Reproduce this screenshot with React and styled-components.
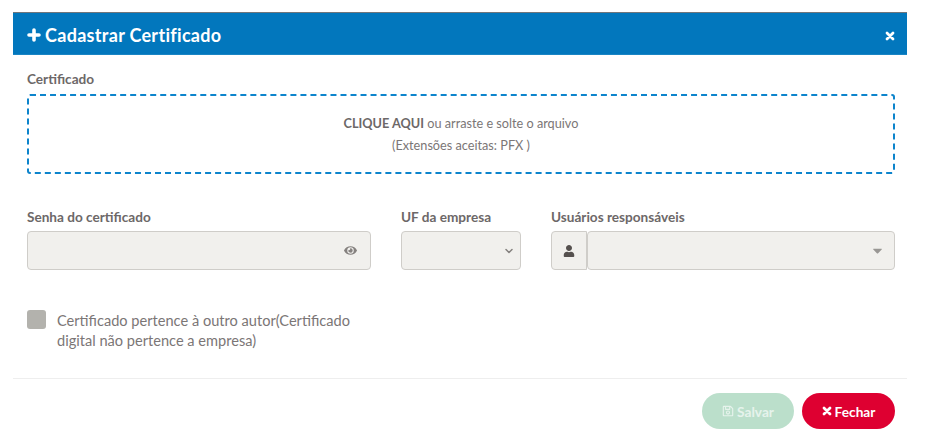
import React from "react";
import styled, { createGlobalStyle } from "styled-components";
import { FaEye, FaUser, FaRegSave, FaCaretDown } from "react-icons/fa";
import { LuChevronDown } from "react-icons/lu";

const Global = createGlobalStyle`
  html, body { margin: 0; padding: 0; background: #fff; }
  body { font-family: "Lato", "Open Sans", sans-serif; color: #6d6868; }
  * { box-sizing: border-box; }
`;

const Page = styled.div`
  width: 933px;
  height: 442px;
  padding: 12px 26px 0 13px;
  overflow: hidden;
`;

const Modal = styled.div`
  display: flex;
  flex-direction: column;
  background: #fff;
`;

const Header = styled.header`
  height: 43px;
  background: #0277bd;
  border-top: 1px solid #70767c;
  border-bottom: 1px solid #1a85c4;
  display: flex;
  align-items: center;
  justify-content: space-between;
  padding: 2px 12px 0 14px;
  color: #fff;
`;

const Title = styled.h1`
  margin: 0;
  font-size: 18px;
  font-weight: 700;
  letter-spacing: 0.3px;
  display: flex;
  align-items: center;
  gap: 4px;
`;

const Glyph = styled.svg`
  flex: none;
  display: block;
  stroke: currentColor;
  fill: none;
  stroke-linecap: round;
`;

const PlusIcon = () => (
  <Glyph width="14" height="14" viewBox="0 0 14 14" strokeWidth="3.6">
    <path d="M7 2v10M2 7h10" />
  </Glyph>
);

const CrossIcon = ({ size }) => (
  <Glyph width={size} height={size} viewBox="0 0 10 10" strokeWidth="2.8">
    <path d="M2 2l6 6M8 2l-6 6" />
  </Glyph>
);

const CloseButton = styled.span`
  display: flex;
  margin-top: 2px;
`;

const Body = styled.div`
  padding: 16px 12px 0 14px;
  display: flex;
  flex-direction: column;
`;

const Label = styled.label`
  display: block;
  font-size: 13.6px;
  font-weight: 700;
  line-height: 16px;
  color: #6d6868;
`;

const DropZone = styled.div`
  margin-top: 7px;
  height: 80px;
  border: 2px dashed #0d84cc;
  border-radius: 3px;
  display: flex;
  flex-direction: column;
  align-items: center;
  justify-content: center;
  gap: 6px;
  font-size: 12.7px;
  line-height: 16px;
  color: #7b7676;
  padding-bottom: 1px;
`;

const Strong = styled.strong`
  font-weight: 700;
  color: #6d6868;
`;

const FieldGrid = styled.div`
  margin-top: 35px;
  display: grid;
  grid-template-columns: 344px 120px 344px;
  column-gap: 30px;
`;

const Field = styled.div`
  display: flex;
  flex-direction: column;
  gap: 6px;
`;

const Control = styled.div`
  height: 39px;
  background: #f1f0ed;
  border: 1px solid #cfcdc9;
  border-radius: 4px;
  display: flex;
  align-items: center;
  justify-content: flex-end;
  padding-right: ${(p) => p.$pr || 13}px;
  color: #85817f;
  flex: ${(p) => (p.$grow ? 1 : "none")};
`;

const InputGroup = styled.div`
  display: flex;
`;

const Addon = styled.div`
  width: 36px;
  height: 39px;
  background: #f1f0ed;
  border: 1px solid #cfcdc9;
  border-radius: 4px 0 0 4px;
  display: flex;
  align-items: center;
  justify-content: center;
  color: #55504e;
`;

const CheckRow = styled.div`
  margin-top: 40px;
  display: flex;
  gap: 11px;
  align-items: flex-start;
`;

const CheckBox = styled.div`
  width: 19px;
  height: 19px;
  flex: none;
  border-radius: 3px;
  background: #b3b2ad;
`;

const CheckText = styled.div`
  width: 310px;
  font-size: 14.6px;
  line-height: 20px;
  color: #7b7676;
  padding-top: 1px;
`;

const Footer = styled.footer`
  margin-top: 27px;
  border-top: 1px solid #eeeeee;
  padding: 14px 12px 0 0;
  display: flex;
  justify-content: flex-end;
  gap: 8px;
`;

const Button = styled.button`
  width: ${(p) => p.$w}px;
  height: 36px;
  border: 0;
  border-radius: 18px;
  background: ${(p) => p.$bg};
  color: ${(p) => p.$fg};
  font: 700 13.7px "Lato", sans-serif;
  display: flex;
  align-items: center;
  justify-content: center;
  gap: 3px;
  padding: 0;
`;

export default function App() {
  return (
    <>
      <Global />
      <Page>
        <Modal>
          <Header>
            <Title>
              <PlusIcon />
              Cadastrar Certificado
            </Title>
            <CloseButton>
              <CrossIcon size={10} />
            </CloseButton>
          </Header>
          <Body>
            <Label>Certificado</Label>
            <DropZone>
              <div>
                <Strong>CLIQUE AQUI</Strong> ou arraste e solte o arquivo
              </div>
              <div>(Extensões aceitas: PFX )</div>
            </DropZone>
            <FieldGrid>
              <Field>
                <Label>Senha do certificado</Label>
                <Control>
                  <FaEye size={13} />
                </Control>
              </Field>
              <Field>
                <Label>UF da empresa</Label>
                <Control $pr={5}>
                  <LuChevronDown size={12} strokeWidth={3} />
                </Control>
              </Field>
              <Field>
                <Label>Usuários responsáveis</Label>
                <InputGroup>
                  <Addon>
                    <FaUser size={12} />
                  </Addon>
                  <Control $grow $pr={9}>
                    <FaCaretDown size={15} color="#999794" />
                  </Control>
                </InputGroup>
              </Field>
            </FieldGrid>
            <CheckRow>
              <CheckBox />
              <CheckText>
                Certificado pertence à outro autor(Certificado digital não pertence a empresa)
              </CheckText>
            </CheckRow>
          </Body>
          <Footer>
            <Button $w={92} $bg="#bbdfcb" $fg="#e6f3ec">
              <FaRegSave size={12} />
              Salvar
            </Button>
            <Button $w={93} $bg="#de0031" $fg="#fff">
              <CrossIcon size={10} />
              Fechar
            </Button>
          </Footer>
        </Modal>
      </Page>
    </>
  );
}
